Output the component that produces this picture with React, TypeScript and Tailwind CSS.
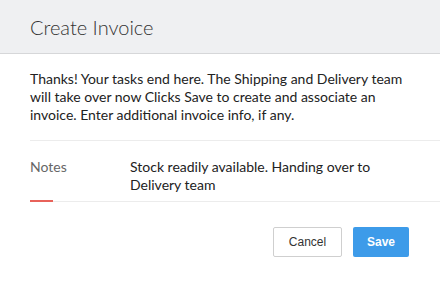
import React from "react";

export default function App() {
  return (
    <div className="w-[440px] h-[288px] bg-white overflow-hidden font-['Lato','Noto_Sans',sans-serif] text-[#222]">
      {/* Header */}
      <div className="h-[54px] bg-[#eff0f2] border-b border-[#d6d7d9] flex items-center pl-[30px]">
        <h1 className="text-[20px] font-light text-[#333] leading-none pt-[1px]">Create Invoice</h1>
      </div>

      {/* Body */}
      <div className="pl-[30px] pt-[16px]">
        <p className="text-[14px] leading-[18px] pr-[20px]">
          Thanks! Your tasks end here. The Shipping and Delivery team will take over now Clicks Save to create and associate an invoice. Enter additional invoice info, if any.
        </p>

        <div className="relative mt-[16px] border-t border-b border-[#ececec] flex pt-[17px] pb-[7px] text-[14px] leading-[18px]">
          <div className="w-[100px] text-[#666]">Notes</div>
          <div className="w-[250px]">Stock readily available. Handing over to Delivery team</div>
          <span className="absolute left-0 bottom-[-1px] w-[23px] h-[2px] bg-[#e8625a]" />
        </div>
      </div>

      {/* Footer */}
      <div className="flex justify-end gap-[11px] pr-[31px] pt-[25px] font-['Liberation_Sans',Arial,sans-serif] text-[12px]">
        <button className="w-[69px] h-[30px] border border-[#cfcfcf] rounded-[2px] bg-white text-[#333]">Cancel</button>
        <button className="w-[56px] h-[30px] rounded-[2px] bg-[#3d9be9] text-white font-bold">Save</button>
      </div>
    </div>
  );
}
